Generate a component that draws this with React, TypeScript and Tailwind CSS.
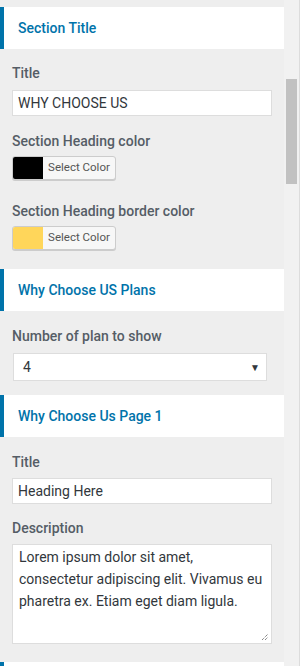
import { ReactNode } from "react";

const FONT = { fontFamily: "Roboto, 'Liberation Sans', sans-serif" };

function SectionHeader({ title, className = "" }: { title?: string; className?: string }) {
  return (
    <div className={`h-[42px] bg-white border-l-4 border-[#0073aa] flex items-center pl-[14px] ${className}`}>
      {title && <span className="text-[14px] font-medium text-[#0073aa]">{title}</span>}
    </div>
  );
}

function Label({ children, className = "" }: { children: ReactNode; className?: string }) {
  return <div className={`px-3 text-[14px] leading-5 font-medium text-[#555d66] ${className}`}>{children}</div>;
}

function TextInput({ value, className = "" }: { value: string; className?: string }) {
  return (
    <div className={`mx-3 w-[260px] h-[26px] bg-white border border-[#dddddd] px-[5px] flex items-center text-[14px] text-[#32373c] ${className}`}>
      {value}
    </div>
  );
}

function ColorButton({ color, className = "" }: { color: string; className?: string }) {
  return (
    <div className={`ml-3 flex h-6 w-[104px] rounded-[3px] border border-[#cccccc] overflow-hidden bg-[#f7f7f7] shadow-[0_1px_0_#cccccc] ${className}`}>
      <div className="w-[30px] h-full" style={{ backgroundColor: color }} />
      <div className="flex-1 flex items-center justify-center text-[11.5px] text-[#555555]">Select Color</div>
    </div>
  );
}

export default function App() {
  return (
    <div className="flex w-[300px] h-[666px] overflow-hidden bg-[#eeeeee]" style={FONT}>
      <div className="w-[284px] shrink-0 pt-[7px]">
        <SectionHeader title="Section Title" />

        <Label className="mt-[14px]">Title</Label>
        <TextInput value="WHY CHOOSE US" className="mt-[7px]" />

        <Label className="mt-[15px]">Section Heading color</Label>
        <ColorButton color="#000000" className="mt-[5px]" />

        <Label className="mt-[21px]">Section Heading border color</Label>
        <ColorButton color="#ffd65a" className="mt-[5px]" />

        <SectionHeader title="Why Choose US Plans" className="mt-[19px]" />

        <Label className="mt-[15px]">Number of plan to show</Label>
        <div className="ml-[13px] mt-[7px] w-[254px] h-[28px] bg-white border border-[#dddddd] flex items-center justify-between pl-[9px] pr-[6px] text-[14px] text-[#32373c]">
          <span>4</span>
          <span className="text-[10px] text-[#32373c]">▼</span>
        </div>

        <SectionHeader title="Why Choose Us Page 1" className="mt-[14px]" />

        <Label className="mt-[15px]">Title</Label>
        <TextInput value="Heading Here" className="mt-[6px]" />

        <Label className="mt-[14px]">Description</Label>
        <div className="relative mx-3 mt-[6px] w-[260px] h-[100px] bg-white border border-[#dddddd] px-[6px] pt-[1px] text-[14px] leading-[22px] text-[#32373c]">
          Lorem ipsum dolor sit amet, consectetur adipiscing elit. Vivamus eu pharetra ex. Etiam eget diam ligula.
          <svg className="absolute right-[2px] bottom-[2px]" width="8" height="8" viewBox="0 0 8 8">
            <path d="M1 7 L7 1 M4 7 L7 4" stroke="#555" strokeWidth="1" strokeDasharray="1 1" />
          </svg>
        </div>

        {/* next section header, only its top edge is in view */}
        <SectionHeader className="mt-[18px]" />
      </div>

      <div className="w-[16px] h-full shrink-0 bg-[#f1f1f1] border-r border-[#dcdcdc] flex flex-col items-center">
        <div className="mt-[79px] w-[11px] h-[105px] shrink-0 bg-[#c1c1c1]" />
      </div>
    </div>
  );
}
